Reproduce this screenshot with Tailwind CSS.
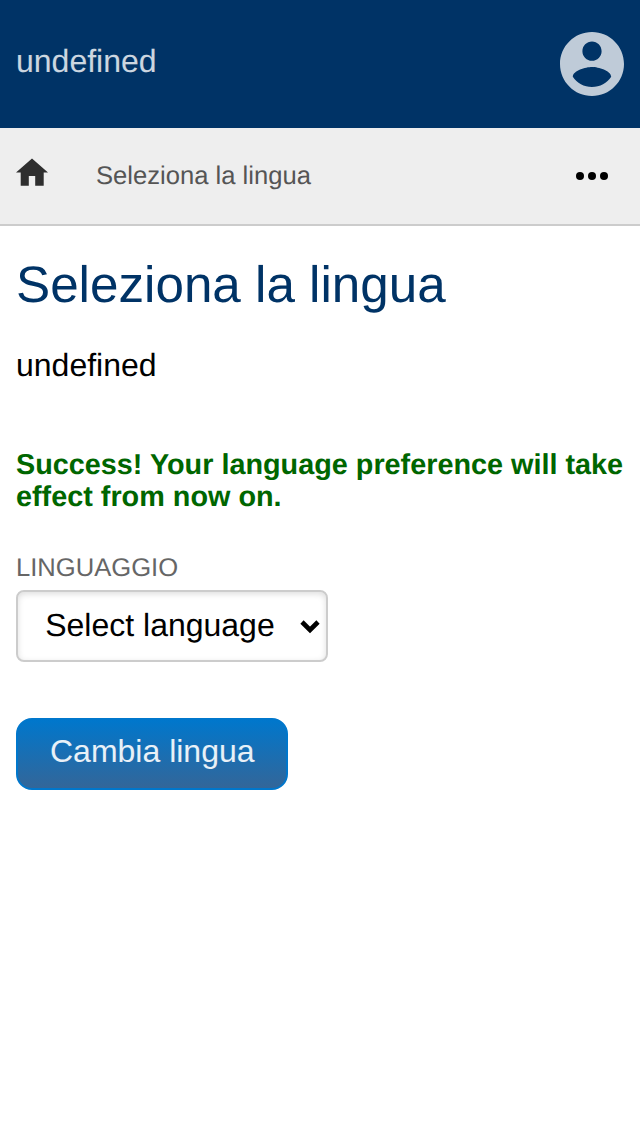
<!DOCTYPE html>
<html lang="it"><head><meta charset="utf-8"><title>Seleziona la lingua</title>
<script src="https://cdn.jsdelivr.net/npm/@tailwindcss/browser@4"></script></head>
<body class="bg-white text-black font-['Liberation_Sans',Arial,sans-serif] min-h-[1136px] [text-rendering:geometricPrecision]">
<header class="h-32 bg-[#003366] flex justify-between px-4">
<span class="mt-[42px] text-[32px] leading-[38px] text-white/80">undefined</span>
<svg class="mt-8 size-16 fill-white/75" viewBox="2 2 20 20"><path d="M12 2C6.48 2 2 6.48 2 12s4.48 10 10 10 10-4.480 10-10S17.520 2 12 2zm0 3c1.660 0 3 1.340 3 3s-1.340 3-3 3-3-1.340-3-3 1.340-3 3-3zm0 14.200c-2.500 0-4.710-1.280-6-3.220.030-1.990 4-3.080 6-3.080 1.990 0 5.970 1.090 6 3.080-1.290 1.940-3.500 3.220-6 3.220z"/></svg>
</header>
<nav class="h-[98px] bg-[#eeeeee] border-b-2 border-[#cccccc] flex items-start px-4">
<svg class="mt-[30px] w-8 h-7 fill-[#2e2e2e]" viewBox="0 0 32 28"><path d="M16 .5 32 14.500H27.700V27.700H19.200V18H12.800V27.700H4.700V14.500H0z"/></svg>
<span class="ml-12 mt-[33px] text-[25.6px] leading-[30px] text-[#555555]">Seleziona la lingua</span>
<svg class="ml-auto mr-4 mt-11 w-8 h-2" viewBox="0 0 32 8"><circle cx="4" cy="4" r="4"/><circle cx="16" cy="4" r="4"/><circle cx="28" cy="4" r="4"/></svg>
</nav>
<main class="px-4 flex flex-col items-start">
<h1 class="mt-[29px] text-[51.2px] leading-[60px] text-[#003366]">Seleziona la lingua</h1>
<p class="mt-[31px] text-[32px] leading-[38px]">undefined</p>
<p class="mt-[65px] text-[28.8px] leading-8 font-bold text-[#006600] whitespace-nowrap">Success! Your language preference will take<br>effect from now on.</p>
<label class="mt-10 text-[25.6px] leading-[30px] text-[#666666]">LINGUAGGIO</label>
<div class="mt-[7px] w-[312px] h-[72px] border-2 border-[#cccccc] rounded-lg shadow-[inset_0_2px_6px_#dddddd] flex items-start">
<span class="ml-[27.2px] mt-[14px] text-[32px] leading-[38px] whitespace-nowrap">Select language</span>
<svg class="ml-auto mr-[6px] mt-[28px] w-5 h-[14px] shrink-0" viewBox="0 0 20 14" fill="none" stroke="black" stroke-width="4.6"><path d="M2 2l8 8 8-8"/></svg>
</div>
<button class="mt-14 w-[272px] h-[72px] rounded-2xl border-2 border-[#0077cc] bg-linear-to-b/srgb from-[#0077cc] to-[#336699] text-[32px] leading-[38px] text-white/90 pb-[6px] pl-[0.5px]">Cambia lingua</button>
</main></body></html>
